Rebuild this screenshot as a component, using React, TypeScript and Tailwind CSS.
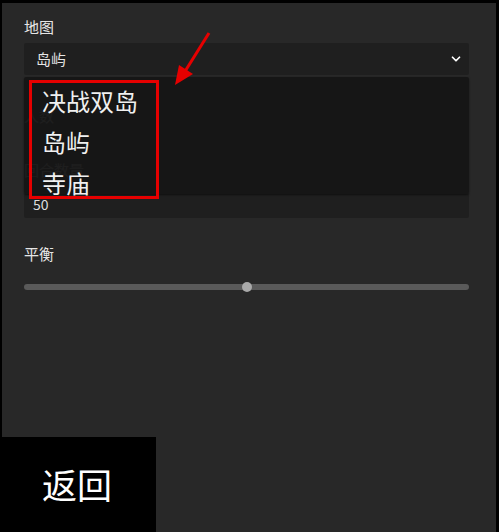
import { ChevronDown } from 'lucide-react';

const font = { fontFamily: '"Noto Sans CJK SC", "Noto Sans", sans-serif' };

const App = () => {
  return (
    <div className="relative w-[499px] h-[532px] bg-black pt-[3px] pl-[2px] pr-[3px] overflow-hidden" style={font}>
      <div className="relative h-full bg-[#282828] pl-[22px] pr-[27px] pt-[14px]">
        {/* map select */}
        <div className="text-[15px] leading-[20px] text-[#e6e6e6]">地图</div>
        <div className="mt-[6px] h-[32px] bg-[#1f1f1f] rounded-[2px] flex items-center justify-between pl-[12px] pr-[6px] text-[15px] text-[#e6e6e6]">
          <span>岛屿</span>
          <ChevronDown size={14} strokeWidth={3} className="text-white" />
        </div>

        <div className="mt-[31px] text-[15px] leading-[20px] text-[#e6e6e6]">人数</div>
        <div className="mt-[34px] text-[15px] leading-[20px] text-[#e6e6e6]">回合数量</div>
        <div className="mt-[13px] h-[25px] bg-[#1f1f1f] rounded-[2px] flex items-center pl-[9px] text-[14px] leading-[16px] text-[#dddddd]">
          <span className="-mt-[4px]">50</span>
        </div>

        <div className="mt-[26px] text-[15px] leading-[20px] text-[#e6e6e6]">平衡</div>
        <div className="mt-[18px] relative h-[10px] flex items-center">
          <div className="w-full h-[6px] rounded-full bg-[#5a5a5a]" />
          <div className="absolute left-[218px] top-0 w-[10px] h-[10px] rounded-full bg-[#a9a9a9]" />
        </div>

        {/* open dropdown list */}
        <div className="absolute left-[22px] right-[27px] top-[74px] h-[117px] bg-[#161616]/[0.96] rounded-[2px] shadow-[0_1px_2px_rgba(0,0,0,0.5)] pt-[3px] pl-[18px] text-[24px] leading-[30px] text-[#f0f0f0]">
          <div className="h-[41px] flex items-center">决战双岛</div>
          <div className="h-[41px] flex items-center">岛屿</div>
          <div className="h-[41px] flex items-center">寺庙</div>
        </div>

        {/* annotation */}
        <div className="absolute left-[27px] top-[77px] w-[130px] h-[119px] border-[3px] border-[#e60000]" />
        <svg className="absolute left-0 top-0" width="494" height="200" viewBox="0 0 494 200">
          <line x1="207" y1="30" x2="182" y2="70" stroke="#e60000" strokeWidth="3" />
          <polygon points="173,82 177,62 191,71" fill="#e60000" />
        </svg>
      </div>

      <div className="absolute left-0 bottom-0 w-[156px] h-[95px] bg-black flex items-center justify-center text-[35px] text-white">
        <span className="-ml-[2px]">返回</span>
      </div>
    </div>
  );
};

export default App;
